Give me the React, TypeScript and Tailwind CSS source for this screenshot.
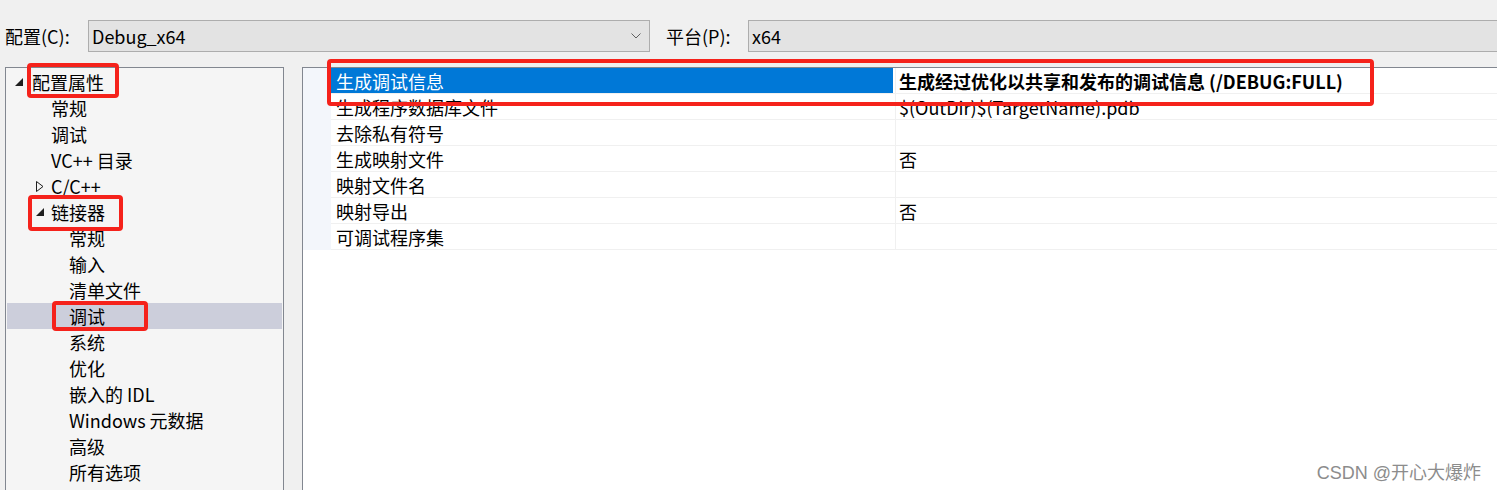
import React from 'react';

const font = { fontFamily: '"Noto Sans CJK SC", "Noto Sans", sans-serif' };

type TreeItem = { label: string; pad: string; arrow?: 'open' | 'closed'; arrowPad?: string; selected?: boolean };

const tree: TreeItem[] = [
  { label: '配置属性', pad: 'pl-[25px]', arrow: 'open', arrowPad: 'pl-[8px]' },
  { label: '常规', pad: 'pl-[44px]' },
  { label: '调试', pad: 'pl-[44px]' },
  { label: 'VC++ 目录', pad: 'pl-[44px]' },
  { label: 'C/C++', pad: 'pl-[44px]', arrow: 'closed', arrowPad: 'pl-[29px]' },
  { label: '链接器', pad: 'pl-[44px]', arrow: 'open', arrowPad: 'pl-[29px]' },
  { label: '常规', pad: 'pl-[62px]' },
  { label: '输入', pad: 'pl-[62px]' },
  { label: '清单文件', pad: 'pl-[62px]' },
  { label: '调试', pad: 'pl-[62px]', selected: true },
  { label: '系统', pad: 'pl-[62px]' },
  { label: '优化', pad: 'pl-[62px]' },
  { label: '嵌入的 IDL', pad: 'pl-[62px]' },
  { label: 'Windows 元数据', pad: 'pl-[62px]' },
  { label: '高级', pad: 'pl-[62px]' },
  { label: '所有选项', pad: 'pl-[62px]' },
];

const props = [
  { name: '生成调试信息', value: '生成经过优化以共享和发布的调试信息 (/DEBUG:FULL)', selected: true },
  { name: '生成程序数据库文件', value: '$(OutDir)$(TargetName).pdb' },
  { name: '去除私有符号', value: '' },
  { name: '生成映射文件', value: '否' },
  { name: '映射文件名', value: '' },
  { name: '映射导出', value: '否' },
  { name: '可调试程序集', value: '' },
];

function Arrow({ kind }: { kind: 'open' | 'closed' }) {
  if (kind === 'open') {
    return (
      <svg width="8" height="8" viewBox="0 0 8 8" className="absolute top-[9px]">
        <polygon points="8,0 8,8 0,8" fill="#1e1e1e" />
      </svg>
    );
  }
  return (
    <svg width="8" height="11" viewBox="0 0 8 11" className="absolute top-[8px]">
      <polygon points="0.5,0.5 7,5.5 0.5,10.5" fill="none" stroke="#1e1e1e" strokeWidth="1" />
    </svg>
  );
}

export default function App() {
  return (
    <div className="relative w-[1497px] h-[490px] overflow-hidden bg-[#f0f0f0] text-[18px] text-black flex flex-col" style={font}>
      {/* top bar */}
      <div className="flex items-center pt-[20px] h-[52px] shrink-0">
        <span className="pl-[5px] w-[88px] leading-none">配置(C):</span>
        <div className="w-[562px] h-[32px] border border-[#adadad] bg-[#e3e3e3] flex items-center justify-between pl-[3px] pr-[8px]">
          <span className="leading-none">Debug_x64</span>
          <svg width="10" height="6" viewBox="0 0 10 6">
            <polyline points="0.5,0.5 5,5 9.5,0.5" fill="none" stroke="#606060" strokeWidth="1" />
          </svg>
        </div>
        <span className="ml-[16px] w-[82px] leading-none">平台(P):</span>
        <div className="flex-1 -mr-[4px] h-[32px] border border-[#adadad] bg-[#e3e3e3] flex items-center pl-[3px]">
          <span className="leading-none">x64</span>
        </div>
      </div>

      {/* panels */}
      <div className="flex flex-1 mt-[15px] min-h-0">
        <div className="ml-[5px] w-[279px] border border-[#828790] bg-[#f5f5f5] pt-[1px] px-[1px] h-[440px] shrink-0">
          {tree.map((t, i) => (
            <div key={i} className={`relative h-[26px] flex items-center ${t.pad} ${t.selected ? 'bg-[#cccedb]' : ''}`}>
              {t.arrow && (
                <div className={`absolute inset-0 ${t.arrowPad}`}>
                  <Arrow kind={t.arrow} />
                </div>
              )}
              <span className="leading-none whitespace-nowrap">{t.label}</span>
            </div>
          ))}
        </div>

        <div className="ml-[18px] flex-1 -mr-[4px] border-l border-t border-[#828790] bg-white">
          <div className="flex">
            <div className="w-[28px] bg-[#f3f6fb]" />
            <div className="flex-1">
              {props.map((p, i) => (
                <div key={i} className="flex h-[26px] border-b border-[#f0f0f0]">
                  <div className="w-[565px] flex items-center border-r border-[#f0f0f0]">
                    <div className={`h-full w-[562px] flex items-center pl-[5px] ${p.selected ? 'bg-[#0078d7] text-white' : ''}`}>
                      <span className="leading-none">{p.name}</span>
                    </div>
                  </div>
                  <div className={`flex-1 flex items-center pl-[3px] ${p.selected ? 'font-bold' : ''}`}>
                    <span className="leading-none whitespace-nowrap">{p.value}</span>
                  </div>
                </div>
              ))}
            </div>
          </div>
        </div>
      </div>

      {/* annotation boxes */}
      <div className="absolute left-[27px] top-[63px] w-[92px] h-[35px] border-[4px] border-[#f5221b] rounded-[4px]" />
      <div className="absolute left-[28px] top-[195px] w-[95px] h-[36px] border-[4px] border-[#f5221b] rounded-[4px]" />
      <div className="absolute left-[52px] top-[301px] w-[96px] h-[30px] border-[4px] border-[#f5221b] rounded-[4px]" />
      <div className="absolute left-[327px] top-[59px] w-[1047px] h-[47px] border-[4px] border-[#f5221b] rounded-[4px]" />

      {/* watermark */}
      <div
        className="absolute right-[16px] bottom-[8px] text-[18px] text-[#8c8c8c] leading-none"
        style={{ fontFamily: '"Liberation Sans", "Noto Sans CJK SC", sans-serif', textShadow: '0 0 1px #ffffff' }}
      >
        CSDN @开心大爆炸
      </div>
    </div>
  );
}
